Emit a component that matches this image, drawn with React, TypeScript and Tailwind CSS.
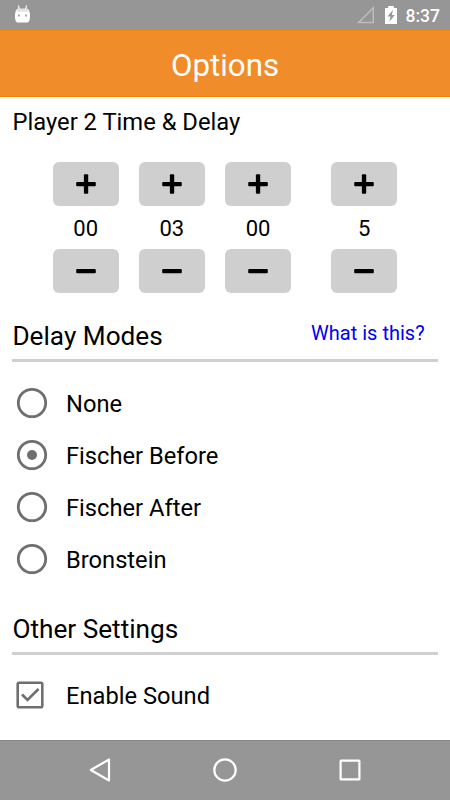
import { useState } from "react";

const columns = [
  { id: "hours", value: 0, pad: 2, className: "" },
  { id: "minutes", value: 3, pad: 2, className: "ml-[20px]" },
  { id: "seconds", value: 0, pad: 2, className: "ml-[20px]" },
  { id: "delay", value: 5, pad: 1, className: "ml-[40px]" },
];

const delayModes = ["None", "Fischer Before", "Fischer After", "Bronstein"];

const StatusBar = () => (
  <div className="flex h-[30px] items-center bg-[#969696] pl-[15px] pr-[10px]">
    <svg width="15" height="18" viewBox="0 0 15 18" className="mb-[3px]">
      <path d="M3.400 0.500L4.400 4.500M11.600 0.500L10.600 4.500" stroke="#f4f4f4" strokeWidth="1.200" />
      <path
        d="M2.500 3.800h10C14.200 4.500 15 7.500 15 11c0 4-.8 6.500-3 6.500H3C.8 17.500 0 15 0 11c0-3.500.8-6.500 2.500-7.200z"
        fill="#fff"
      />
      <path d="M2.500 3.800h10l1.200 3H1.300z" fill="#e3e3e3" />
      <rect x="3" y="9.500" width="2" height="2" fill="#aaa" />
      <rect x="10" y="9.500" width="2" height="2" fill="#aaa" />
    </svg>
    <svg width="18" height="18" viewBox="0 0 18 18" className="ml-auto">
      <path d="M16.300 1.800v14.600H1.700z" fill="none" stroke="#bdbdbd" strokeWidth="1.500" />
    </svg>
    <svg width="12" height="18" viewBox="0 0 12 18" className="ml-[10px]">
      <path d="M3.200 0h5.600v2H12v16H0V2h3.200z" fill="#fff" />
      <path d="M8 3.800L2.500 10.500h3L4.300 15.800 9.800 9h-3z" fill="#969696" />
    </svg>
    <span className="ml-[9px] pt-[2px] text-[17.5px] font-medium leading-[30px] text-white">8:37</span>
  </div>
);

const StepButton = ({ plus, onClick }: { plus?: boolean; onClick: () => void }) => (
  <button
    onClick={onClick}
    aria-label={plus ? "Increase" : "Decrease"}
    className="flex h-[44px] w-full items-center justify-center rounded-[6px] bg-[#cfcfcf]">
    <svg width="20" height="20" viewBox="0 0 20 20">
      <rect x="0.200" y="7.900" width="19.600" height="4.300" rx="1" />
      {plus && <rect x="7.900" y="0.200" width="4.300" height="19.600" rx="1" />}
    </svg>
  </button>
);

const SectionTitle = ({ title, link }: { title: string; link?: string }) => (
  <div className="mx-[12.4px] flex h-[52px] justify-between border-b-3 border-[#d0d0d0]">
    <h2 className="text-[26.2px] leading-[52px]">{title}</h2>
    {link && (
      <a href="#" className="pr-[13px] text-[20px] leading-[46px] text-[#0000f5]">
        {link}
      </a>
    )}
  </div>
);

const NavigationBar = () => (
  <div className="flex h-[60px] items-center border-t border-[#868686] bg-[#969696] px-[88px] pb-[1px]">
    <svg width="24" height="26" viewBox="0 0 24 26" fill="none" stroke="#fff" strokeWidth="2.200">
      <path d="M21 2.500v21L2.800 13z" strokeLinejoin="round" />
    </svg>
    <svg width="26" height="26" viewBox="0 0 26 26" fill="none" stroke="#fff" strokeWidth="2.200" className="mx-auto">
      <circle cx="13" cy="13" r="10.700" />
    </svg>
    <svg width="24" height="24" viewBox="0 0 24 24" fill="none" stroke="#fff" strokeWidth="2.200">
      <rect x="2.600" y="2.600" width="18.800" height="18.800" rx="0.500" />
    </svg>
  </div>
);

export default function App() {
  const [values, setValues] = useState(columns.map((c) => c.value));
  const [mode, setMode] = useState("Fischer Before");
  const [sound, setSound] = useState(true);

  const step = (index: number, amount: number) =>
    setValues(values.map((v, i) => (i === index ? Math.max(0, v + amount) : v)));

  return (
    <div className="flex h-[800px] w-[450px] flex-col overflow-hidden bg-white font-[Roboto,sans-serif] text-black">
      <StatusBar />
      <header className="h-[67px] border-y border-[#f58500] bg-[#f08c2a] pt-[2px] text-center">
        <h1 className="text-[31.25px] leading-[66px] text-white">Options</h1>
      </header>

      <main className="flex-1">
        <h2 className="pl-[12.5px] pt-[7px] text-[23.75px] leading-[36px]">Player 2 Time &amp; Delay</h2>
        <div className="mt-[22px] flex pl-[52.6px]">
          {columns.map(({ id, pad, className }, index) => (
            <div key={id} className={`w-[66.2px] ${className}`}>
              <StepButton plus onClick={() => step(index, 1)} />
              <div className="h-[43px] text-center text-[22px] leading-[45px]">
                {String(values[index]).padStart(pad, "0")}
              </div>
              <StepButton onClick={() => step(index, -1)} />
            </div>
          ))}
        </div>

        <div className="pt-[17px]">
          <SectionTitle title="Delay Modes" link="What is this?" />
        </div>
        <ul className="pt-[15px]">
          {delayModes.map((name) => (
            <li key={name}>
              <button onClick={() => setMode(name)} className="flex h-[52px] w-full items-center pl-[16px]">
                <svg width="32" height="32" viewBox="0 0 32 32" className="shrink-0">
                  <circle cx="16" cy="16" r="13.700" fill="none" stroke="#6f6f6f" strokeWidth="2.800" />
                  {mode === name && <circle cx="16" cy="16" r="5" fill="#6f6f6f" />}
                </svg>
                <span className="ml-[18px] pt-[2px] text-[23.7px] leading-[32px]">{name}</span>
              </button>
            </li>
          ))}
        </ul>

        <div className="pt-[18px]">
          <SectionTitle title="Other Settings" />
        </div>
        <button onClick={() => setSound(!sound)} className="mt-[14px] flex h-[52px] w-full items-center pl-[16px]">
          <svg width="28" height="28" viewBox="0 0 28 28" fill="none" stroke="#6f6f6f" strokeWidth="2.600">
            <rect x="1.700" y="1.700" width="24.600" height="24.600" rx="1.500" />
            {sound && <path d="M6 13.500l5.500 5.500L22.500 8" />}
          </svg>
          <span className="ml-[22px] pt-[2px] text-[23.7px] leading-[32px]">Enable Sound</span>
        </button>
      </main>

      <NavigationBar />
    </div>
  );
}
